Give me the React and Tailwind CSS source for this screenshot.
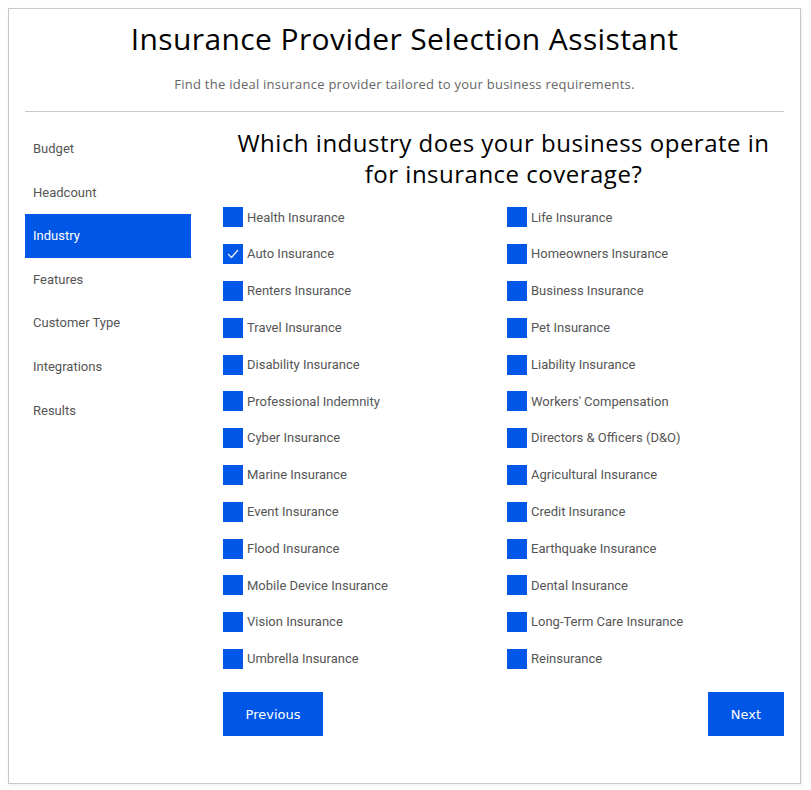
import { useState } from "react";

const steps = [
  "Budget",
  "Headcount",
  "Industry",
  "Features",
  "Customer Type",
  "Integrations",
  "Results",
];

const options = [
  "Health Insurance",
  "Life Insurance",
  "Auto Insurance",
  "Homeowners Insurance",
  "Renters Insurance",
  "Business Insurance",
  "Travel Insurance",
  "Pet Insurance",
  "Disability Insurance",
  "Liability Insurance",
  "Professional Indemnity",
  "Workers' Compensation",
  "Cyber Insurance",
  "Directors & Officers (D&O)",
  "Marine Insurance",
  "Agricultural Insurance",
  "Event Insurance",
  "Credit Insurance",
  "Flood Insurance",
  "Earthquake Insurance",
  "Mobile Device Insurance",
  "Dental Insurance",
  "Vision Insurance",
  "Long-Term Care Insurance",
  "Umbrella Insurance",
  "Reinsurance",
];

function Checkbox({ checked }) {
  return (
    <span className="flex h-5 w-5 shrink-0 items-center justify-center bg-[#0056e6]">
      {checked && (
        <svg viewBox="0 0 20 20" className="h-5 w-5" fill="none">
          <path
            d="M5.5 10.5l3 3 6-7"
            stroke="#dfe8ff"
            strokeWidth="1.4"
            strokeLinecap="round"
            strokeLinejoin="round"
          />
        </svg>
      )}
    </span>
  );
}

export default function App() {
  const [selected, setSelected] = useState(["Auto Insurance"]);
  const activeStep = "Industry";

  const toggle = (name) =>
    setSelected((prev) =>
      prev.includes(name) ? prev.filter((n) => n !== name) : [...prev, name]
    );

  return (
    <div className="p-2 bg-white">
      <div className="w-[793px] h-[776px] border border-[#c8c8c8] bg-white shadow-[1px_1px_3px_rgba(0,0,0,0.08)] px-4">
        {/* Header */}
        <div className="border-b border-[#c8c8c8] pt-[12px] pb-[17px] text-center">
          <h1 className="text-[30px] leading-[36px] text-black font-['Open_Sans',sans-serif] tracking-[0.4px]">
            Insurance Provider Selection Assistant
          </h1>
          <p className="mt-[17px] text-[13px] leading-[20px] text-[#666] font-['Open_Sans',sans-serif] tracking-[0.25px]">
            Find the ideal insurance provider tailored to your business requirements.
          </p>
        </div>

        <div className="flex pt-[15px]">
          {/* Sidebar */}
          <div className="w-[166px] shrink-0 flex flex-col">
            {steps.map((step) => (
              <div
                key={step}
                className={`h-[43.6px] flex items-center px-2 text-[13px] font-['Roboto',sans-serif] ${
                  step === activeStep
                    ? "bg-[#0056e6] text-white"
                    : "text-[#555]"
                }`}
              >
                {step}
              </div>
            ))}
          </div>

          {/* Main */}
          <div className="flex-1 ml-8">
            <h2 className="text-center text-[24px] leading-[31px] font-medium text-black font-['Open_Sans',sans-serif] tracking-[0.5px]">
              Which industry does your business operate in for insurance coverage?
            </h2>
            <div className="grid grid-cols-2 gap-x-[7px] mt-[10px]">
              {options.map((name) => (
                <label
                  key={name}
                  onClick={() => toggle(name)}
                  className="flex items-center gap-1 h-[36.8px] cursor-pointer text-[13px] text-[#555] font-['Roboto',sans-serif]"
                >
                  <Checkbox checked={selected.includes(name)} />
                  <span>{name}</span>
                </label>
              ))}
            </div>
            <div className="flex justify-between mt-[15px]">
              <button className="w-[100px] h-[44px] bg-[#0056e6] text-white text-[13px] font-['DejaVu_Sans',sans-serif]">
                Previous
              </button>
              <button className="w-[76px] h-[44px] bg-[#0056e6] text-white text-[13px] font-['DejaVu_Sans',sans-serif]">
                Next
              </button>
            </div>
          </div>
        </div>
      </div>
    </div>
  );
}
